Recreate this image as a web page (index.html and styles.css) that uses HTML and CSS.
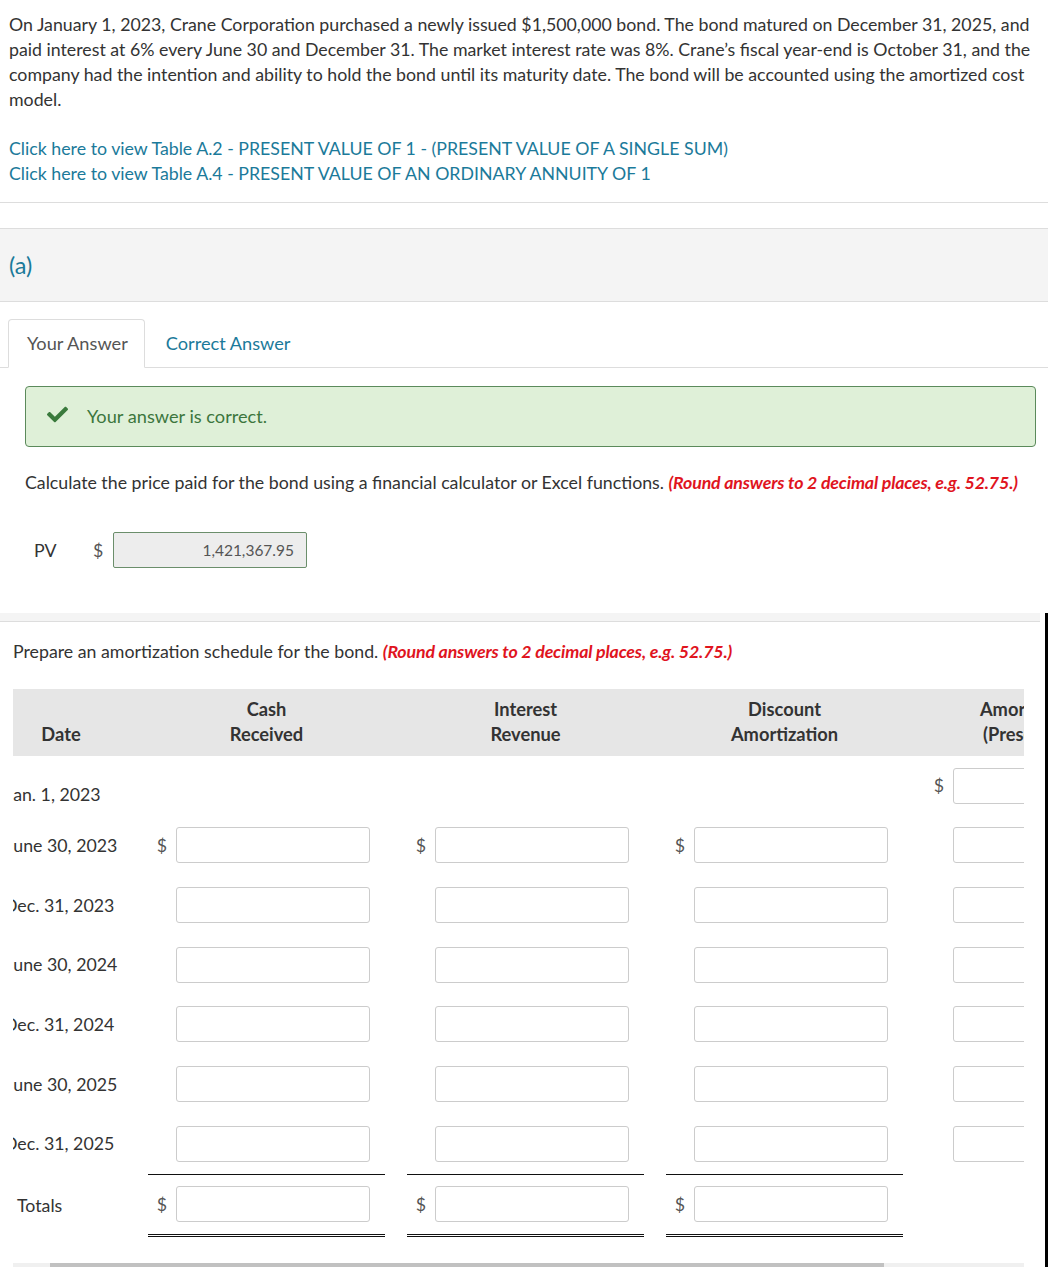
FILE: index.html
```html
<!DOCTYPE html>
<html>
<head>
<meta charset="utf-8">
<link rel="stylesheet" href="styles.css">
</head>
<body>
<div class="intro">
  <p class="question">On January 1, 2023, Crane Corporation purchased a newly issued $1,500,000 bond. The bond matured on December 31, 2025, and paid interest at 6% every June 30 and December 31. The market interest rate was 8%. Crane’s fiscal year-end is October 31, and the company had the intention and ability to hold the bond until its maturity date. The bond will be accounted using the amortized cost model.</p>
  <div class="links">
    <a class="link">Click here to view Table A.2 - PRESENT VALUE OF 1 - (PRESENT VALUE OF A SINGLE SUM)</a>
    <a class="link">Click here to view Table A.4 - PRESENT VALUE OF AN ORDINARY ANNUITY OF 1</a>
  </div>
</div>
<div class="rule"></div>
<div class="part"><span class="part-label">(a)</span></div>
<div class="tabs">
  <div class="tab active">Your Answer</div>
  <div class="tab">Correct Answer</div>
</div>
<div class="alert">
  <svg class="check" viewBox="0 0 512 512"><path d="M173.898 439.404l-166.4-166.4c-9.997-9.997-9.997-26.206 0-36.204l36.203-36.204c9.997-9.998 26.207-9.998 36.204 0L192 312.69 432.095 72.596c9.997-9.997 26.207-9.997 36.204 0l36.203 36.204c9.997 9.997 9.997 26.206 0 36.204l-294.4 294.401c-9.998 9.997-26.207 9.997-36.204-.001z"/></svg>
  <span>Your answer is correct.</span>
</div>
<p class="prompt">Calculate the price paid for the bond using a financial calculator or Excel functions. <em class="hint">(Round answers to 2 decimal places, e.g. 52.75.)</em></p>
<div class="pv">
  <span class="pv-label">PV</span>
  <span class="pv-cur">$</span>
  <div class="pv-box">1,421,367.95</div>
</div>

<section class="sched">
  <div class="band"></div>
  <p class="prompt2">Prepare an amortization schedule for the bond. <em class="hint">(Round answers to 2 decimal places, e.g. 52.75.)</em></p>
  <div class="scroller">
    <div class="table">
      <div class="thead">
        <div class="th th-date">Date</div>
        <div class="th">Cash<br>Received</div>
        <div class="th">Interest<br>Revenue</div>
        <div class="th">Discount<br>Amortization</div>
        <div class="th">Amortized Cost<br>(Present Value)</div>
      </div>

      <div class="row">
        <div class="date first">Jan. 1, 2023</div>
        <div class="cell"></div>
        <div class="cell"></div>
        <div class="cell"></div>
        <div class="cell"><span class="cur">$</span><div class="box"></div></div>
      </div>
      <div class="row">
        <div class="date">June 30, 2023</div>
        <div class="cell"><span class="cur">$</span><div class="box"></div></div>
        <div class="cell"><span class="cur">$</span><div class="box"></div></div>
        <div class="cell"><span class="cur">$</span><div class="box"></div></div>
        <div class="cell"><span class="cur"></span><div class="box"></div></div>
      </div>
      <div class="row">
        <div class="date dec">Dec. 31, 2023</div>
        <div class="cell"><span class="cur"></span><div class="box"></div></div>
        <div class="cell"><span class="cur"></span><div class="box"></div></div>
        <div class="cell"><span class="cur"></span><div class="box"></div></div>
        <div class="cell"><span class="cur"></span><div class="box"></div></div>
      </div>
      <div class="row">
        <div class="date">June 30, 2024</div>
        <div class="cell"><span class="cur"></span><div class="box"></div></div>
        <div class="cell"><span class="cur"></span><div class="box"></div></div>
        <div class="cell"><span class="cur"></span><div class="box"></div></div>
        <div class="cell"><span class="cur"></span><div class="box"></div></div>
      </div>
      <div class="row">
        <div class="date dec">Dec. 31, 2024</div>
        <div class="cell"><span class="cur"></span><div class="box"></div></div>
        <div class="cell"><span class="cur"></span><div class="box"></div></div>
        <div class="cell"><span class="cur"></span><div class="box"></div></div>
        <div class="cell"><span class="cur"></span><div class="box"></div></div>
      </div>
      <div class="row">
        <div class="date">June 30, 2025</div>
        <div class="cell"><span class="cur"></span><div class="box"></div></div>
        <div class="cell"><span class="cur"></span><div class="box"></div></div>
        <div class="cell"><span class="cur"></span><div class="box"></div></div>
        <div class="cell"><span class="cur"></span><div class="box"></div></div>
      </div>
      <div class="row">
        <div class="date dec">Dec. 31, 2025</div>
        <div class="cell"><span class="cur"></span><div class="box"></div></div>
        <div class="cell"><span class="cur"></span><div class="box"></div></div>
        <div class="cell"><span class="cur"></span><div class="box"></div></div>
        <div class="cell"><span class="cur"></span><div class="box"></div></div>
      </div>
      <div class="row totals">
        <div class="date tot">Totals</div>
        <div class="cell ruled"><span class="cur">$</span><div class="box"></div></div>
        <div class="cell ruled"><span class="cur">$</span><div class="box"></div></div>
        <div class="cell ruled"><span class="cur">$</span><div class="box"></div></div>
        <div class="cell"></div>
      </div>
    </div>
    <div class="sbar"><div class="thumb"></div></div>
  </div>
</section>
</body>
</html>
```

FILE: styles.css
```css
html, body {
  margin: 0;
  padding: 0;
  background: #fff;
}
body {
  font-family: Lato, "Open Sans", "Liberation Sans", sans-serif;
  font-size: 17.75px;
  line-height: 25px;
  color: #333;
}
.intro {
  padding: 12px 9px 0 9px;
}
.question {
  margin: 0;
}
.links {
  margin-top: 24px;
  display: flex;
  flex-direction: column;
}
.link {
  color: #1b7a9a;
  text-decoration: none;
}
.rule {
  margin-top: 16px;
  height: 1px;
  background: #dddddd;
}
.part {
  margin-top: 25px;
  height: 72px;
  background: #f4f4f4;
  border-top: 1px solid #dddddd;
  border-bottom: 1px solid #dddddd;
  display: flex;
  align-items: center;
  padding-left: 9px;
}
.part-label {
  font-size: 23.5px;
  color: #1b7a9a;
}
.tabs {
  margin-top: 17px;
  display: flex;
  padding-left: 8px;
  border-bottom: 1px solid #dddddd;
  height: 48px;
}
.tab {
  height: 49px;
  box-sizing: border-box;
  line-height: 47px;
  font-size: 18.2px;
  padding: 0 16px 0 18px;
  border: 1px solid transparent;
  color: #1b7a9a;
}
.tab.active {
  color: #555;
  border-color: #dddddd;
  border-bottom-color: #fff;
  border-radius: 4px 4px 0 0;
  background: #fff;
}
.tab + .tab {
  padding-left: 20px;
}
.alert {
  margin: 18px 12px 0 25px;
  height: 61px;
  box-sizing: border-box;
  border: 1px solid #5b8a5b;
  border-radius: 4px;
  background: #dff0d8;
  display: flex;
  align-items: center;
  padding-left: 21px;
  gap: 19px;
  color: #3c763d;
  font-size: 18.2px;
}
.check {
  width: 21px;
  height: 21px;
  fill: #3a7a3c;
  margin-top: -4px;
}
.prompt {
  margin: 23px 0 0 0;
  padding-left: 25px;
}
.hint {
  color: #e0141e;
  font-weight: 700;
  font-style: italic;
  letter-spacing: -0.15px;
}
.pv {
  margin-top: 37px;
  display: flex;
  align-items: center;
  padding-left: 34px;
}
.pv-label {
  width: 59px;
}
.pv-cur {
  width: 20px;
  color: #555;
}
.pv-box {
  width: 194px;
  height: 36px;
  box-sizing: border-box;
  border: 1px solid #6b8e6b;
  border-radius: 2px;
  background: #ededed;
  text-align: right;
  padding-right: 12px;
  line-height: 34px;
  font-size: 15.5px;
  color: #555;
}
.sched {
  margin-top: 45px;
  border-right: 3px solid #000;
}
.band {
  height: 8px;
  background: #f4f4f4;
  border-bottom: 1px solid #dddddd;
  margin-right: 5px;
}
.prompt2 {
  margin: 17px 0 0 0;
  padding-left: 13px;
}
.scroller {
  margin: 25px 0 0 13px;
  width: 1011px;
  overflow: hidden;
}
.table {
  margin-left: -45px;
  width: 1216px;
}
.thead,
.row {
  display: grid;
  grid-template-columns: 180px repeat(4, 259px);
}
.thead {
  background: #e6e6e6;
  height: 67px;
  box-sizing: border-box;
  padding: 8px 0 9px 0;
  align-items: end;
}
.th {
  width: 237px;
  text-align: center;
  font-weight: 700;
  font-size: 18.3px;
  color: #333;
}
.th-date {
  width: 180px;
  padding-left: 6px;
  box-sizing: border-box;
}
.row {
  height: 59.67px;
  align-items: center;
}
.date {
  padding-left: 38px;
  white-space: nowrap;
}
.date.first {
  padding-top: 18px;
}
.date.dec {
  padding-left: 36px;
}
.date.tot {
  padding-left: 49px;
}
.cell {
  width: 237px;
  display: flex;
  align-items: center;
}
.cur {
  width: 28px;
  text-align: center;
  color: #555;
}
.box {
  width: 194px;
  height: 36px;
  box-sizing: border-box;
  border: 1px solid #cccccc;
  border-radius: 3px;
  background: #fff;
}
.row.totals {
  height: 63px;
  align-items: stretch;
}
.row.totals .date {
  align-self: center;
}
.cell.ruled {
  box-sizing: border-box;
  border-top: 1px solid #111;
  border-bottom: 3px double #111;
}
.sbar {
  margin-top: 26px;
  height: 12px;
  background: #f0f0f0;
}
.thumb {
  margin-left: 37px;
  width: 834px;
  height: 100%;
  background: #c1c1c1;
}
```
